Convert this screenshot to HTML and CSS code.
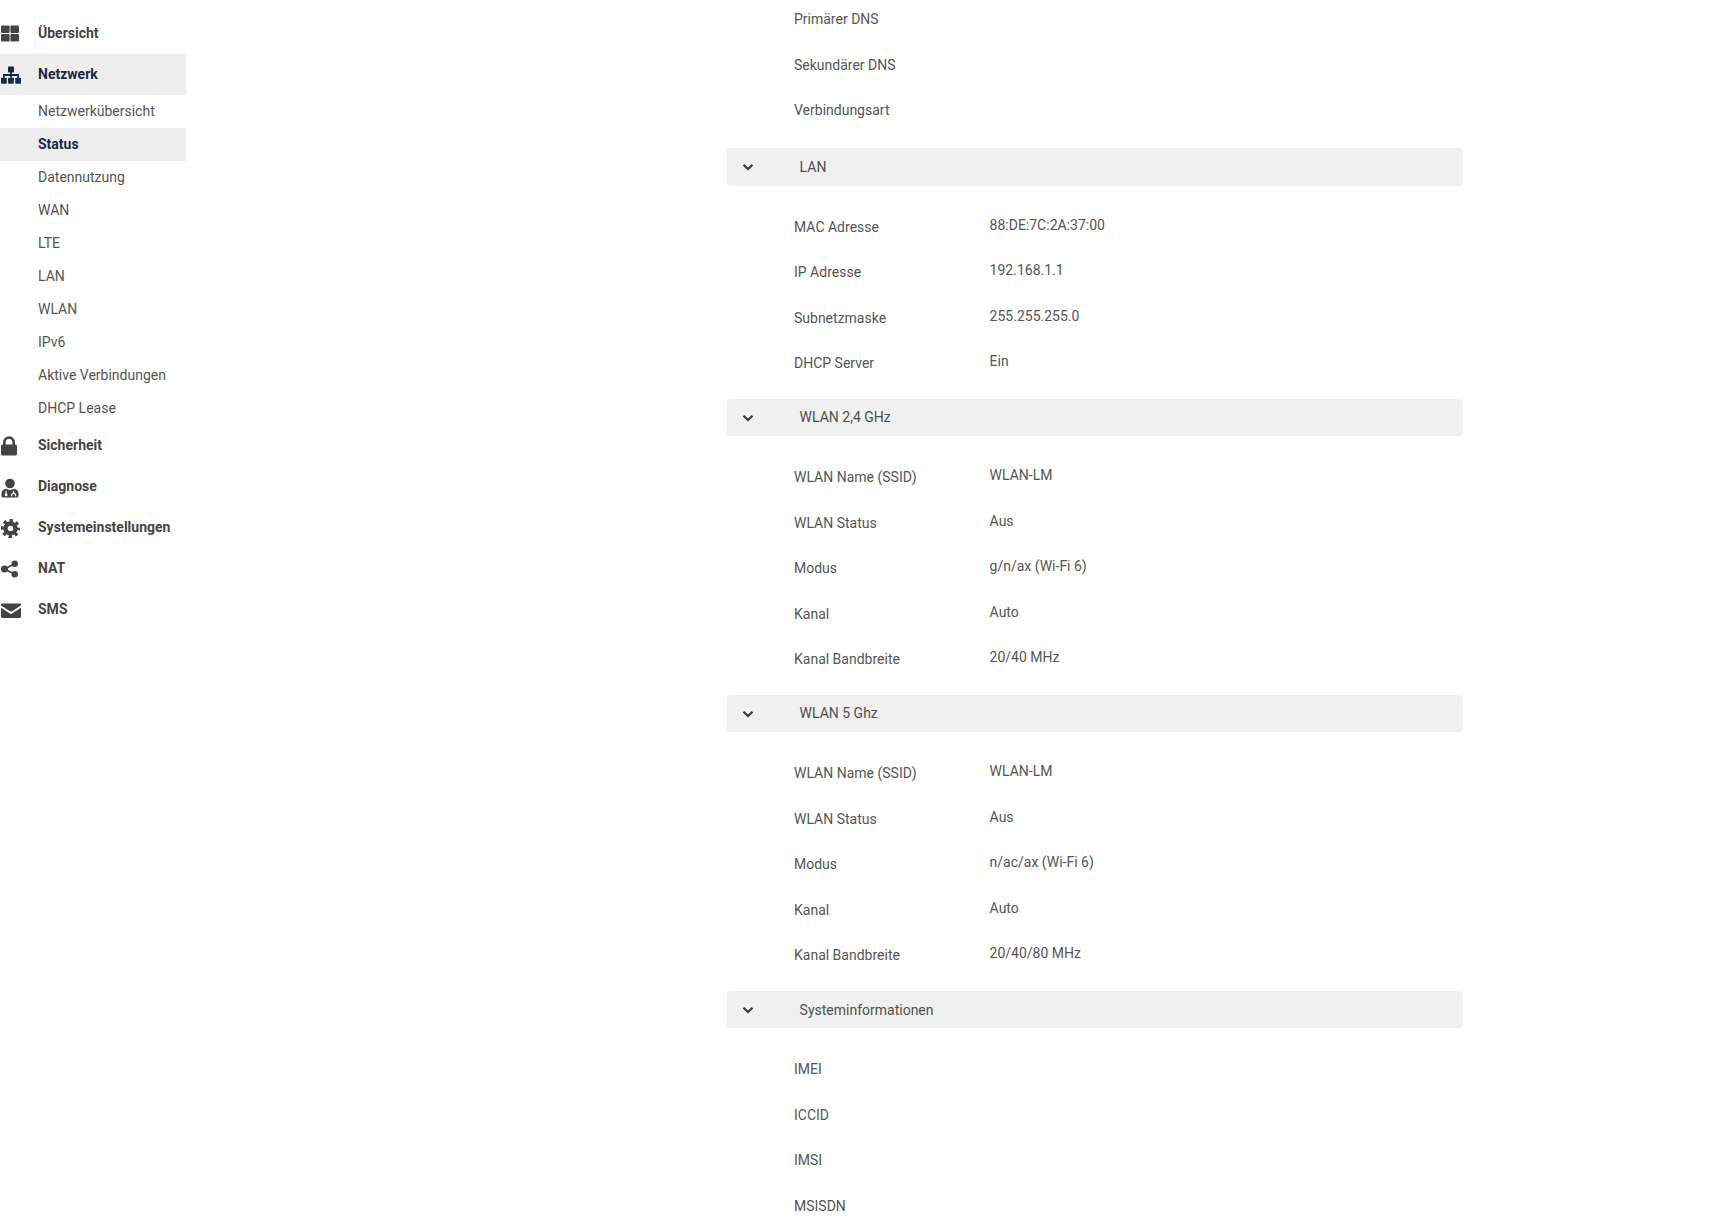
FILE: index.html
```html
<!DOCTYPE html>
<html lang="de">
<head>
<meta charset="utf-8">
<title>Status</title>
<link rel="stylesheet" href="styles.css">
</head>
<body>
<div class="page">
  <nav class="sidebar">
    <a class="nav-item"><svg class="nav-icon" viewBox="0 0 20 20"><rect x="0" y="1.500" width="8.600" height="7.600" rx="1"/><rect x="9.400" y="1.500" width="8.600" height="7.600" rx="1"/><rect x="0" y="9.900" width="8.600" height="7.600" rx="1"/><rect x="9.400" y="9.900" width="8.600" height="7.600" rx="1"/></svg><span>Übersicht</span></a>
    <a class="nav-item active"><svg class="nav-icon" viewBox="0 0 20 20"><rect x="7" y="1.500" width="6" height="6" rx=".7"/><rect x="0" y="12.800" width="5.800" height="6" rx=".7"/><rect x="7.100" y="12.800" width="5.800" height="6" rx=".7"/><rect x="14.200" y="12.800" width="5.800" height="6" rx=".7"/><path class="nav-line" d="M10 7v5.800M2.900 12.800v-2.800h14.200v2.800"/></svg><span>Netzwerk</span></a>
    <a class="sub-item">Netzwerkübersicht</a>
    <a class="sub-item active">Status</a>
    <a class="sub-item">Datennutzung</a>
    <a class="sub-item">WAN</a>
    <a class="sub-item">LTE</a>
    <a class="sub-item">LAN</a>
    <a class="sub-item">WLAN</a>
    <a class="sub-item">IPv6</a>
    <a class="sub-item">Aktive Verbindungen</a>
    <a class="sub-item">DHCP Lease</a>
    <a class="nav-item"><svg class="nav-icon" viewBox="0 0 20 20"><rect x="0" y="8.500" width="16" height="11" rx="1.500"/><path class="nav-line thick" d="M3.300 9V6.300a4.700 4.700 0 0 1 9.400 0V9"/></svg><span>Sicherheit</span></a>
    <a class="nav-item"><svg class="nav-icon" viewBox="0 0 20 20"><g transform="translate(-.5 1.500)"><circle cx="9.500" cy="5" r="4.800"/><path fill-rule="evenodd" d="M5.500 10.300q4 2.200 8 0 4.500 .8 4.500 5v2.200q0 1.500-1.500 1.500h-14q-1.500 0-1.500-1.500v-2.200q0-4.200 4.500-5zM5 12.500v2.500a1.400 1.400 0 1 0 1.200 0v-2.500zM12.500 12.500v1.800q-2 .6-2 2.500v1h1.200v-1q0-1.300 1.400-1.300t1.400 1.300v1h1.200v-1q0-1.900-2-2.500v-1.800z"/></g></svg><span>Diagnose</span></a>
    <a class="nav-item"><svg class="nav-icon" viewBox="0 0 20 20"><circle class="gear-ring" cx="9.500" cy="10.500" r="5"/><circle class="gear-teeth" cx="9.500" cy="10.500" r="7.900"/></svg><span>Systemeinstellungen</span></a>
    <a class="nav-item"><svg class="nav-icon" viewBox="0 0 20 20"><circle cx="13.700" cy="4.700" r="3.200"/><circle cx="3.500" cy="10" r="3.500"/><circle cx="13.700" cy="15.300" r="3.200"/><path class="nav-line" d="M13.700 4.700 3.500 10l10.200 5.300"/></svg><span>NAT</span></a>
    <a class="nav-item"><svg class="nav-icon" viewBox="0 0 20 20"><path transform="translate(-.5 .5)" d="M1.500 3h18q1 0 1 1v1L11 11q-.5 .3-1 0L.5 5V4q0-1 1-1zM.5 7.300 9.500 13q1 .6 2 0l9-5.700V16q0 1.500-1.500 1.500H2Q.5 17.500 .5 16z"/></svg><span>SMS</span></a>
  </nav>
  <main class="content">
    <section class="section first">
      <div class="rows">
        <div class="row"><span class="label">Primärer DNS</span></div>
        <div class="row"><span class="label">Sekundärer DNS</span></div>
        <div class="row"><span class="label">Verbindungsart</span></div>
      </div>
    </section>
    <section class="section">
      <header class="bar"><svg class="chevron" viewBox="0 0 12 8"><path d="M1.500 1.800 6 6l4.500-4.200"/></svg><span>LAN</span></header>
      <div class="rows">
        <div class="row"><span class="label">MAC Adresse</span><span class="value">88:DE:7C:2A:37:00</span></div>
        <div class="row"><span class="label">IP Adresse</span><span class="value">192.168.1.1</span></div>
        <div class="row"><span class="label">Subnetzmaske</span><span class="value">255.255.255.0</span></div>
        <div class="row"><span class="label">DHCP Server</span><span class="value">Ein</span></div>
      </div>
    </section>
    <section class="section">
      <header class="bar"><svg class="chevron" viewBox="0 0 12 8"><path d="M1.500 1.800 6 6l4.500-4.200"/></svg><span>WLAN 2,4 GHz</span></header>
      <div class="rows">
        <div class="row"><span class="label">WLAN Name (SSID)</span><span class="value">WLAN-LM</span></div>
        <div class="row"><span class="label">WLAN Status</span><span class="value">Aus</span></div>
        <div class="row"><span class="label">Modus</span><span class="value">g/n/ax (Wi-Fi 6)</span></div>
        <div class="row"><span class="label">Kanal</span><span class="value">Auto</span></div>
        <div class="row"><span class="label">Kanal Bandbreite</span><span class="value">20/40 MHz</span></div>
      </div>
    </section>
    <section class="section">
      <header class="bar"><svg class="chevron" viewBox="0 0 12 8"><path d="M1.500 1.800 6 6l4.500-4.200"/></svg><span>WLAN 5 Ghz</span></header>
      <div class="rows">
        <div class="row"><span class="label">WLAN Name (SSID)</span><span class="value">WLAN-LM</span></div>
        <div class="row"><span class="label">WLAN Status</span><span class="value">Aus</span></div>
        <div class="row"><span class="label">Modus</span><span class="value">n/ac/ax (Wi-Fi 6)</span></div>
        <div class="row"><span class="label">Kanal</span><span class="value">Auto</span></div>
        <div class="row"><span class="label">Kanal Bandbreite</span><span class="value">20/40/80 MHz</span></div>
      </div>
    </section>
    <section class="section">
      <header class="bar"><svg class="chevron" viewBox="0 0 12 8"><path d="M1.500 1.800 6 6l4.500-4.200"/></svg><span>Systeminformationen</span></header>
      <div class="rows">
        <div class="row"><span class="label">IMEI</span></div>
        <div class="row"><span class="label">ICCID</span></div>
        <div class="row"><span class="label">IMSI</span></div>
        <div class="row"><span class="label">MSISDN</span></div>
      </div>
    </section>
  </main>
</div>
</body>
</html>
```

FILE: styles.css
```css
html, body {
  margin: 0;
  height: 1220px;
  overflow: hidden;
  background: #fff;
}
body {
  font-family: Roboto, "Liberation Sans", sans-serif;
  font-size: 14px;
  color: #4f4f4f;
}
.page {
  display: flex;
  align-items: flex-start;
}
.sidebar {
  flex: 0 0 186px;
  padding-top: 13px;
  display: flex;
  flex-direction: column;
}
.nav-item {
  box-sizing: border-box;
  height: 41px;
  padding-bottom: 2px;
  display: flex;
  align-items: center;
  gap: 17px;
  font-weight: 700;
  color: #444;
}
.nav-item.active {
  background: #eeeeee;
  color: #1b2748;
}
.nav-icon {
  width: 20px;
  height: 20px;
  margin-left: 1px;
  margin-top: 2px;
  fill: currentColor;
  flex: none;
  overflow: visible;
}
.nav-line {
  fill: none;
  stroke: currentColor;
  stroke-width: 1.800;
}
.nav-line.thick {
  stroke-width: 2.600;
}
.gear-ring {
  fill: none;
  stroke: currentColor;
  stroke-width: 4.400;
}
.gear-teeth {
  fill: none;
  stroke: currentColor;
  stroke-width: 3.400;
  stroke-dasharray: 3.200 3.083;
  stroke-dashoffset: 1.600;
}
.sub-item {
  box-sizing: border-box;
  height: 33px;
  padding-bottom: 2px;
  display: flex;
  align-items: center;
  padding-left: 38px;
  color: #555;
}
.sub-item.active {
  background: #eeeeee;
  color: #1b2748;
  font-weight: 700;
}
.content {
  width: 736px;
  margin-left: 541px;
  margin-top: -3.700px;
  display: flex;
  flex-direction: column;
}
.section {
  margin-bottom: 12.800px;
}
.section.first {
  margin-bottom: 15.200px;
}
.bar {
  height: 37.500px;
  display: flex;
  align-items: center;
  background: #f0f0f0;
  border-radius: 4px;
  color: #4f4f4f;
}
.chevron {
  width: 12px;
  height: 8px;
  margin-left: 15px;
  margin-right: 45.600px;
  margin-top: 1px;
  fill: none;
  stroke: #3a3a3a;
  stroke-width: 2.200;
  flex: none;
}
.rows {
  display: flex;
  flex-direction: column;
}
.bar + .rows {
  margin-top: 18.300px;
}
.row {
  height: 45.500px;
  display: flex;
  align-items: center;
  padding-left: 67px;
}
.label {
  width: 195.600px;
  flex: none;
  color: #555;
}
.value {
  color: #555;
  margin-top: -4px;
}
```
